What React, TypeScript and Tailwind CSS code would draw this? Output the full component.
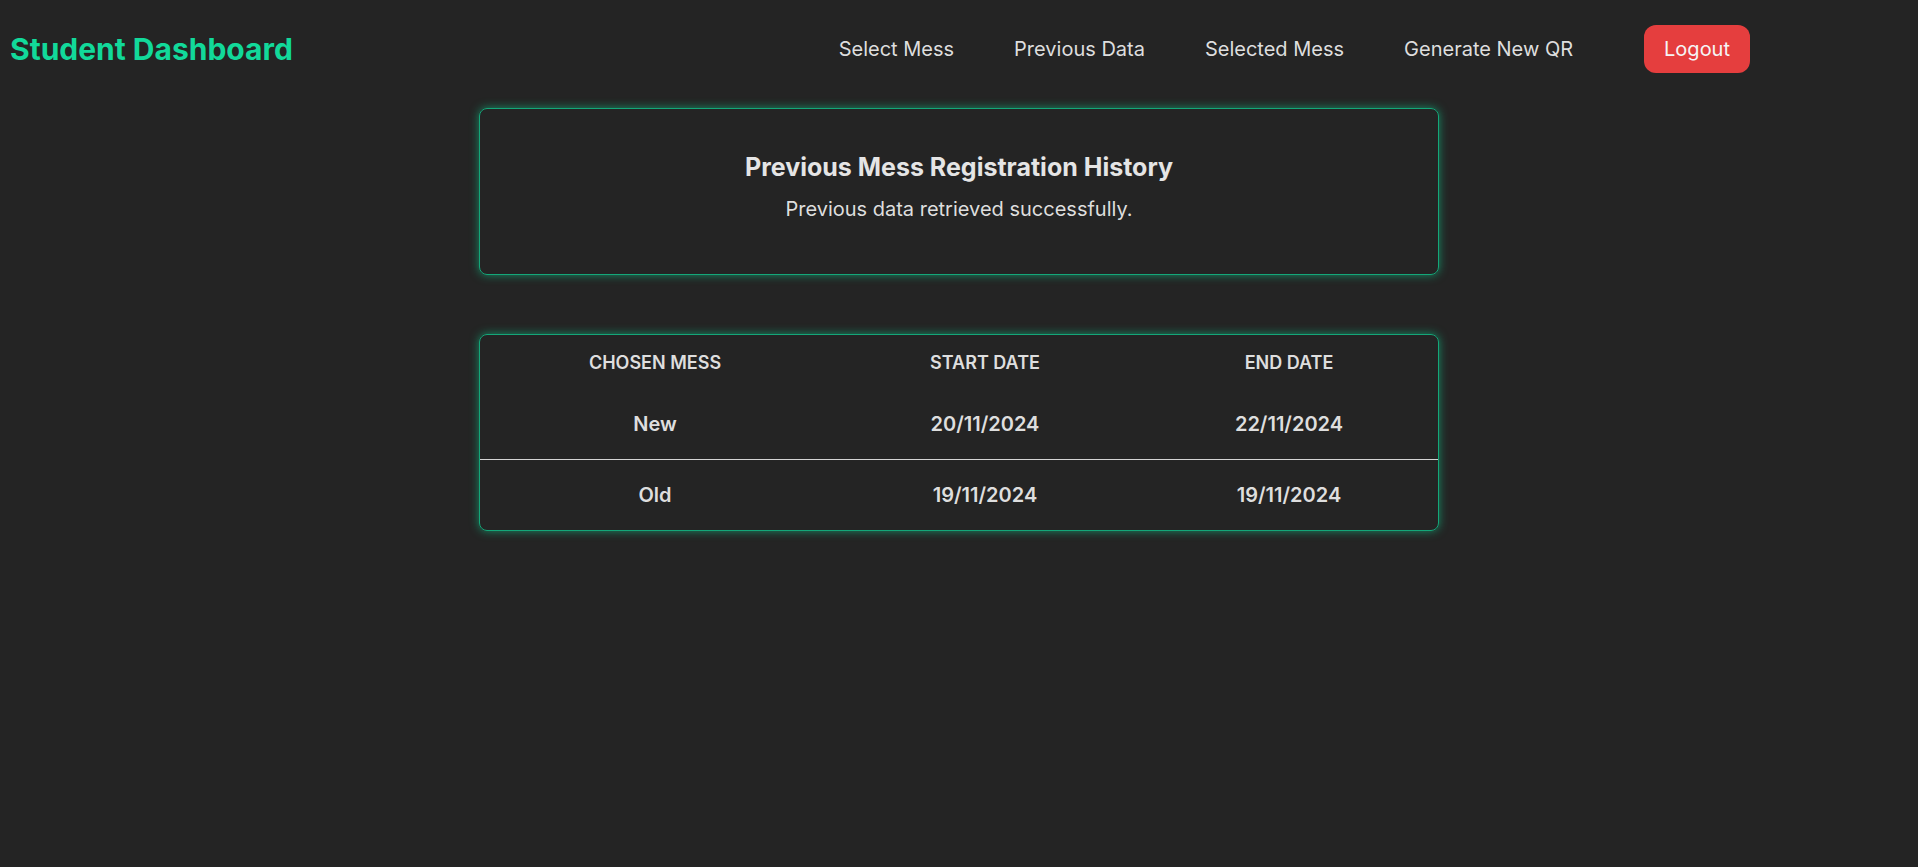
import React from "react";

const links = ["Select Mess", "Previous Data", "Selected Mess", "Generate New QR"];

const history = [
  { mess: "New", start: "20/11/2024", end: "22/11/2024" },
  { mess: "Old", start: "19/11/2024", end: "19/11/2024" },
];

const App = () => {
  return (
    <div className="min-h-screen bg-[#242424] font-['Inter',sans-serif] text-[#dedede]">
      {/* Navbar */}
      <nav className="flex items-center justify-between pt-[25px] pb-[23px] pl-2.5 pr-[168px]">
        <h1 className="text-3xl font-bold text-[#12d99a]">Student Dashboard</h1>
        <div className="flex items-center">
          <ul className="flex gap-[60px] text-xl">
            {links.map((l) => (
              <li key={l} className="cursor-pointer">
                {l}
              </li>
            ))}
          </ul>
          <button className="ml-[71px] rounded-xl bg-[#e53e3e] px-5 py-2.5 text-xl text-[#f5f5f5]">
            Logout
          </button>
        </div>
      </nav>

      <main className="mx-auto mt-3 flex w-[960px] flex-col gap-[59px]">
        {/* Info card */}
        <div className="rounded-lg border border-[#14a779] px-10 pt-[40px] pb-[51px] text-center shadow-[0_0_10px_rgba(16,185,129,0.7)]">
          <h2 className="mb-2 text-[25px] font-bold text-[#e5e5e5]">Previous Mess Registration History</h2>
          <p className="text-xl">Previous data retrieved successfully.</p>
        </div>

        {/* History table */}
        <div className="overflow-hidden rounded-lg border border-[#14a779] shadow-[0_0_10px_rgba(16,185,129,0.7)]">
          <table className="w-full table-fixed text-center">
            <colgroup>
              <col className="w-[350px]" />
              <col className="w-[310px]" />
              <col />
            </colgroup>
            <thead>
              <tr>
                <th className="pt-3.5 pb-3 text-lg font-semibold uppercase">Chosen Mess</th>
                <th className="pt-3.5 pb-3 text-lg font-semibold uppercase">Start Date</th>
                <th className="pt-3.5 pb-3 text-lg font-semibold uppercase">End Date</th>
              </tr>
            </thead>
            <tbody>
              {history.map((h, i) => (
                <tr key={h.mess} className={i < history.length - 1 ? "border-b border-[#d4d4d4]" : ""}>
                  <td className="py-[21px] text-xl font-semibold">{h.mess}</td>
                  <td className="py-[21px] text-xl font-semibold">{h.start}</td>
                  <td className="py-[21px] text-xl font-semibold">{h.end}</td>
                </tr>
              ))}
            </tbody>
          </table>
        </div>
      </main>
    </div>
  );
};

export default App;
